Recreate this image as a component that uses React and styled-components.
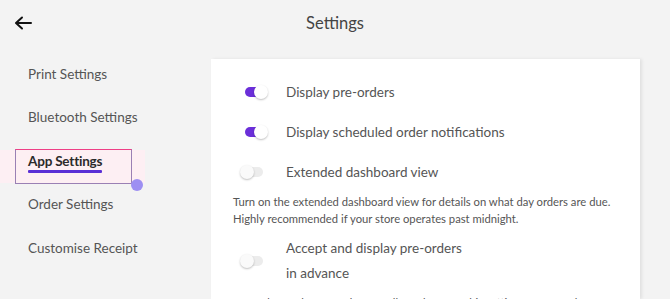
import React from 'react'
import styled, { createGlobalStyle } from 'styled-components'

const GlobalStyle = createGlobalStyle`
  html, body {
    margin: 0;
    padding: 0;
    background: #f3f3f3;
    overflow: hidden;
  }
  body {
    font-family: Lato, "Noto Sans", sans-serif;
    color: #555;
  }
`

const Page = styled.div`
  width: 670px;
  height: 299px;
  display: flex;
  flex-direction: column;
  background: #f3f3f3;
`

const Header = styled.header`
  height: 45px;
  display: grid;
  grid-template-columns: 60px 1fr 60px;
  align-items: center;
`

const BackButton = styled.button`
  border: 0;
  background: none;
  padding: 0 0 0 14px;
  display: flex;
  align-items: center;
  cursor: pointer;
`

const Title = styled.h1`
  margin: 0;
  text-align: center;
  font-size: 16.5px;
  font-weight: 400;
  color: #444;
`

const Body = styled.div`
  flex: 1;
  display: flex;
  padding-right: 30px;
  min-height: 0;
`

const Sidebar = styled.nav`
  width: 211px;
  display: flex;
  flex-direction: column;
  padding-top: 7px;
`

const NavItem = styled.div`
  position: relative;
  height: 43.5px;
  display: flex;
  align-items: center;
  padding-left: 28px;
  font-size: 13.5px;
  color: ${(p) => (p.active ? '#2a2a2a' : '#555')};
  font-weight: ${(p) => (p.active ? 700 : 400)};
  background: ${(p) => (p.active ? 'linear-gradient(180deg, transparent 11px, #fdeff3 11px, #fdeff3 44px, transparent 44px)' : 'transparent')};
  background-size: 145px 100%;
  background-repeat: no-repeat;
`

const NavLabel = styled.span`
  position: relative;
  display: inline-block;
  letter-spacing: ${(p) => (p.active ? '-0.2px' : '0')};
  &::after {
    content: '';
    display: ${(p) => (p.active ? 'block' : 'none')};
    position: absolute;
    left: 0;
    right: 0;
    top: calc(100% + 1px);
    height: 3px;
    background: #5a2fd6;
    border-radius: 1px;
  }
`

const FocusRing = styled.span`
  position: absolute;
  left: 15px;
  top: 10px;
  width: 117px;
  height: 35px;
  box-sizing: border-box;
  border: 1.5px solid #9a80b4;
  border-top-color: #ee3f86;
  pointer-events: none;
`

const FocusDot = styled.span`
  position: absolute;
  left: 131px;
  top: 40px;
  width: 12px;
  height: 12px;
  border-radius: 50%;
  background: #9d8ff2;
`

const Card = styled.main`
  flex: 1;
  margin-top: 14px;
  background: #fff;
  box-shadow: 2px 0 3px rgba(0, 0, 0, 0.08);
  padding: 13px 22px 0 22px;
  overflow: hidden;
`

const ToggleRow = styled.div`
  display: flex;
  align-items: center;
  gap: 18px;
  min-height: 40px;
  padding-left: 7px;
  margin-top: ${(p) => p.gapTop || '0'};
`

const Switch = styled.span`
  position: relative;
  flex: none;
  width: 28px;
  height: 16px;
  &::before {
    content: '';
    position: absolute;
    left: 5px;
    right: 5px;
    top: 3px;
    height: 10px;
    border-radius: 5px;
    background: ${(p) => (p.on ? '#6b2fd9' : '#ececec')};
  }
  &::after {
    content: '';
    position: absolute;
    top: 1px;
    left: ${(p) => (p.on ? '14px' : '0')};
    width: 14px;
    height: 14px;
    border-radius: 50%;
    background: ${(p) => (p.on ? '#fff' : '#fafafa')};
    box-shadow: 0 1px 2px rgba(0, 0, 0, 0.25);
  }
`

const RowLabel = styled.span`
  font-size: 13.5px;
  color: #555;
  line-height: 25px;
  max-width: ${(p) => p.maxWidth || 'none'};
`

const Description = styled.p`
  margin: 0;
  font-size: 11.25px;
  line-height: 17px;
  color: #555;
  white-space: nowrap;
  margin-top: ${(p) => p.gapTop || '0'};
`

const ArrowIcon = () => (
  <svg width="18" height="14" viewBox="0 0 18 14" fill="none">
    <path d="M17 7H2.5M8 1.5L2 7l6 5.5" stroke="#111" strokeWidth="2" strokeLinecap="round" strokeLinejoin="round" />
  </svg>
)

const navItems = ['Print Settings', 'Bluetooth Settings', 'App Settings', 'Order Settings', 'Customise Receipt']

export default function App() {
  return (
    <>
      <GlobalStyle />
      <Page>
        <Header>
          <BackButton aria-label="Back">
            <ArrowIcon />
          </BackButton>
          <Title>Settings</Title>
          <span />
        </Header>
        <Body>
          <Sidebar>
            {navItems.map((item) => {
              const active = item === 'App Settings'
              return (
                <NavItem key={item} active={active}>
                  <NavLabel active={active}>{item}</NavLabel>
                  {active && <FocusRing />}
                  {active && <FocusDot />}
                </NavItem>
              )
            })}
          </Sidebar>
          <Card>
            <ToggleRow>
              <Switch on />
              <RowLabel>Display pre-orders</RowLabel>
            </ToggleRow>
            <ToggleRow>
              <Switch on />
              <RowLabel>Display scheduled order notifications</RowLabel>
            </ToggleRow>
            <ToggleRow>
              <Switch />
              <RowLabel>Extended dashboard view</RowLabel>
            </ToggleRow>
            <Description gapTop="1px">
              Turn on the extended dashboard view for details on what day orders are due.
              <br />
              Highly recommended if your store operates past midnight.
            </Description>
            <ToggleRow gapTop="9px">
              <Switch />
              <RowLabel maxWidth="185px">Accept and display pre-orders in advance</RowLabel>
            </ToggleRow>
            <Description gapTop="8px">
              If you don't take pre-orders, you'll need to turn this setting on to see them.
            </Description>
          </Card>
        </Body>
      </Page>
    </>
  )
}
